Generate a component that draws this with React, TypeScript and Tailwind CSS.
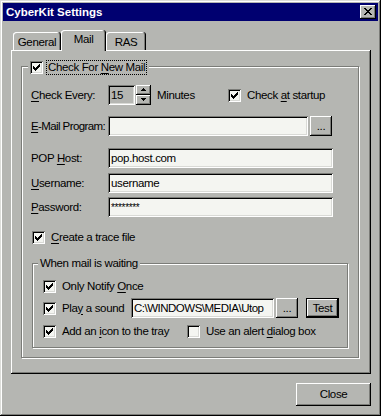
import React from "react";

const FACE = "bg-[#b5b6b2]";
const RAISED = "shadow-[inset_-1px_-1px_#000,inset_1px_1px_#fff,inset_-2px_-2px_#7b7c78]";
const SUNKEN = "shadow-[inset_1px_1px_#7b7c78,inset_-1px_-1px_#fff,inset_2px_2px_#000,inset_-2px_-2px_#d9dad6]";
const ETCHED = "border border-[#7b7c78] shadow-[1px_1px_0_#fff,inset_1px_1px_0_#fff]";
const TAB = "rounded-t-[3px] bg-[#b5b6b2] shadow-[inset_-1px_0_#000,inset_1px_1px_#fff,inset_-2px_0_#7b7c78]";
const WINDOW = "shadow-[inset_-1px_-1px_#000,inset_1px_1px_#dcddd9,inset_-2px_-2px_#7b7c78,inset_2px_2px_#fff]";

const CHECK = ["......X", ".....XX", "X...XXX", "XX.XXX.", "XXXXX..", ".XXX...", "..X...."];
const CLOSE_X = ["XX....XX", ".XX..XX.", "..XXXX..", "...XX...", "..XXXX..", ".XX..XX.", "XX....XX"];
const UP = ["..X..", ".XXX.", "XXXXX"];
const DOWN = ["XXXXX", ".XXX.", "..X.."];

function Pixels({ rows }: { rows: string[] }) {
  return (
    <svg width={rows[0].length} height={rows.length} shapeRendering="crispEdges" className="block">
      {rows.flatMap((r, y) =>
        r.split("").map((c, x) =>
          c === "X" ? <rect key={`${x}-${y}`} x={x} y={y} width={1} height={1} fill="#000" /> : null
        )
      )}
    </svg>
  );
}

function U({ children }: { children: React.ReactNode }) {
  return <span className="underline decoration-1 underline-offset-[2px]">{children}</span>;
}

function Check({ checked }: { checked?: boolean }) {
  return (
    <span className={`block w-[13px] h-[13px] shrink-0 bg-[#f4f5f1] p-[3px] ${SUNKEN}`}>
      {checked && <Pixels rows={CHECK} />}
    </span>
  );
}

function Field({ className, children }: { className: string; children?: React.ReactNode }) {
  return (
    <div className={`h-[20px] shrink-0 flex items-center overflow-hidden whitespace-nowrap pl-[3px] ${SUNKEN} ${className}`}>
      {children}
    </div>
  );
}

function Btn({ className, children }: { className: string; children: React.ReactNode }) {
  return (
    <div className={`shrink-0 flex items-center justify-center ${FACE} ${RAISED} ${className}`}>{children}</div>
  );
}

export default function App() {
  return (
    <div
      className={`w-[381px] h-[416px] p-[3px] flex flex-col text-[11.5px] leading-[13px] tracking-[-0.35px] text-black font-['Liberation_Sans',Arial,sans-serif] ${FACE} ${WINDOW}`}
    >
      {/* Title bar */}
      <div className="h-[18px] shrink-0 bg-[#000070] flex items-center justify-between pl-[3px] pr-[2px]">
        <span className="text-white font-bold tracking-normal">CyberKit Settings</span>
        <div className={`w-[16px] h-[14px] pl-[4px] pt-[3px] ${FACE} ${RAISED}`}>
          <Pixels rows={CLOSE_X} />
        </div>
      </div>

      {/* Tabs */}
      <div className="mt-[9px] ml-[10px] h-[20px] flex items-end relative z-10">
        <div className={`w-[48px] h-[18px] pt-[2px] flex items-center justify-center ${TAB}`}>General</div>
        <div className={`w-[45px] h-[21px] -mb-px pb-[2px] flex items-center justify-center ${TAB}`}>Mail</div>
        <div className={`w-[40px] h-[18px] pt-[2px] flex items-center justify-center ${TAB}`}>RAS</div>
      </div>

      {/* Tab panel */}
      <div className={`ml-[8px] w-[360px] h-[324px] shrink-0 pl-[10px] pt-[16px] ${RAISED}`}>
        <div className={`relative w-[338px] h-[292px] pl-[9px] pt-[18px] ${ETCHED}`}>
          <div className={`absolute -top-[7px] left-[6px] px-[2px] h-[15px] flex items-center gap-[3px] ${FACE}`}>
            <Check checked />
            <span className="h-[15px] px-px flex items-center border border-dotted border-black whitespace-nowrap">
              <span>
                Check For <U>N</U>ew Mail
              </span>
            </span>
          </div>

          {/* Check every */}
          <div className="flex items-center h-[20px]">
            <span className="w-[77px] shrink-0">
              <U>C</U>heck Every:
            </span>
            <Field className={`w-[27px] ${FACE}`}>15</Field>
            <div className="ml-px w-[15px] h-[20px] flex flex-col">
              <Btn className="h-[10px] pb-px">
                <Pixels rows={UP} />
              </Btn>
              <Btn className="h-[10px] pb-px">
                <Pixels rows={DOWN} />
              </Btn>
            </div>
            <span className="ml-[6px] w-[71px] shrink-0">Minutes</span>
            <Check checked />
            <span className="ml-[6px] whitespace-nowrap">
              Check <U>a</U>t startup
            </span>
          </div>

          {/* E-Mail program */}
          <div className="mt-[11px] flex items-center h-[20px]">
            <span className="w-[77px] shrink-0 whitespace-nowrap tracking-[-0.6px]">
              <U>E</U>-Mail Program:
            </span>
            <Field className="w-[200px] bg-[#f4f5f1]" />
            <Btn className="ml-[2px] w-[22px] h-[20px]">...</Btn>
          </div>

          <div className="mt-[12px] flex items-center h-[20px]">
            <span className="w-[77px] shrink-0">
              POP <U>H</U>ost:
            </span>
            <Field className="w-[225px] bg-[#f4f5f1]">pop.host.com</Field>
          </div>

          <div className="mt-[5px] flex items-center h-[20px]">
            <span className="w-[77px] shrink-0">
              <U>U</U>sername:
            </span>
            <Field className="w-[225px] bg-[#f4f5f1]">username</Field>
          </div>

          <div className="mt-[4px] flex items-center h-[20px]">
            <span className="w-[77px] shrink-0">
              <U>P</U>assword:
            </span>
            <Field className="w-[225px] bg-[#f4f5f1]">
              <span className="text-[10px]">********</span>
            </Field>
          </div>

          <div className="mt-[14px] ml-px flex items-center gap-[6px] h-[13px]">
            <Check checked />
            <span>
              <U>C</U>reate a trace file
            </span>
          </div>

          {/* When mail is waiting */}
          <div className={`relative mt-[19px] ml-px w-[316px] h-[85px] pl-[10px] pt-[16px] ${ETCHED}`}>
            <span className={`absolute -top-[7px] left-[5px] px-[2px] whitespace-nowrap ${FACE}`}>When mail is waiting</span>

            <div className="flex items-center gap-[6px] h-[13px]">
              <Check checked />
              <span>
                Only Notify <U>O</U>nce
              </span>
            </div>

            <div className="mt-[5px] flex items-center h-[20px]">
              <Check checked />
              <span className="ml-[6px] w-[69px] shrink-0 whitespace-nowrap">
                Pla<U>y</U> a sound
              </span>
              <Field className="w-[143px] bg-[#f4f5f1] tracking-[-0.5px]">{"C:\\WINDOWS\\MEDIA\\Utop"}</Field>
              <Btn className="ml-[2px] w-[22px] h-[20px]">...</Btn>
              <div className="ml-[8px] w-[33px] h-[20px] border border-black">
                <Btn className="w-full h-full">Test</Btn>
              </div>
            </div>

            <div className="mt-[7px] flex items-center h-[13px]">
              <Check checked />
              <span className="ml-[6px] w-[125px] shrink-0 whitespace-nowrap">
                Add an <U>i</U>con to the tray
              </span>
              <Check />
              <span className="ml-[6px] whitespace-nowrap">
                Use an alert <U>d</U>ialog box
              </span>
            </div>
          </div>
        </div>
      </div>

      {/* Bottom buttons */}
      <div className="ml-[8px] w-[360px] mt-[9px] flex justify-end">
        <Btn className="w-[75px] h-[23px]">Close</Btn>
      </div>
    </div>
  );
}
